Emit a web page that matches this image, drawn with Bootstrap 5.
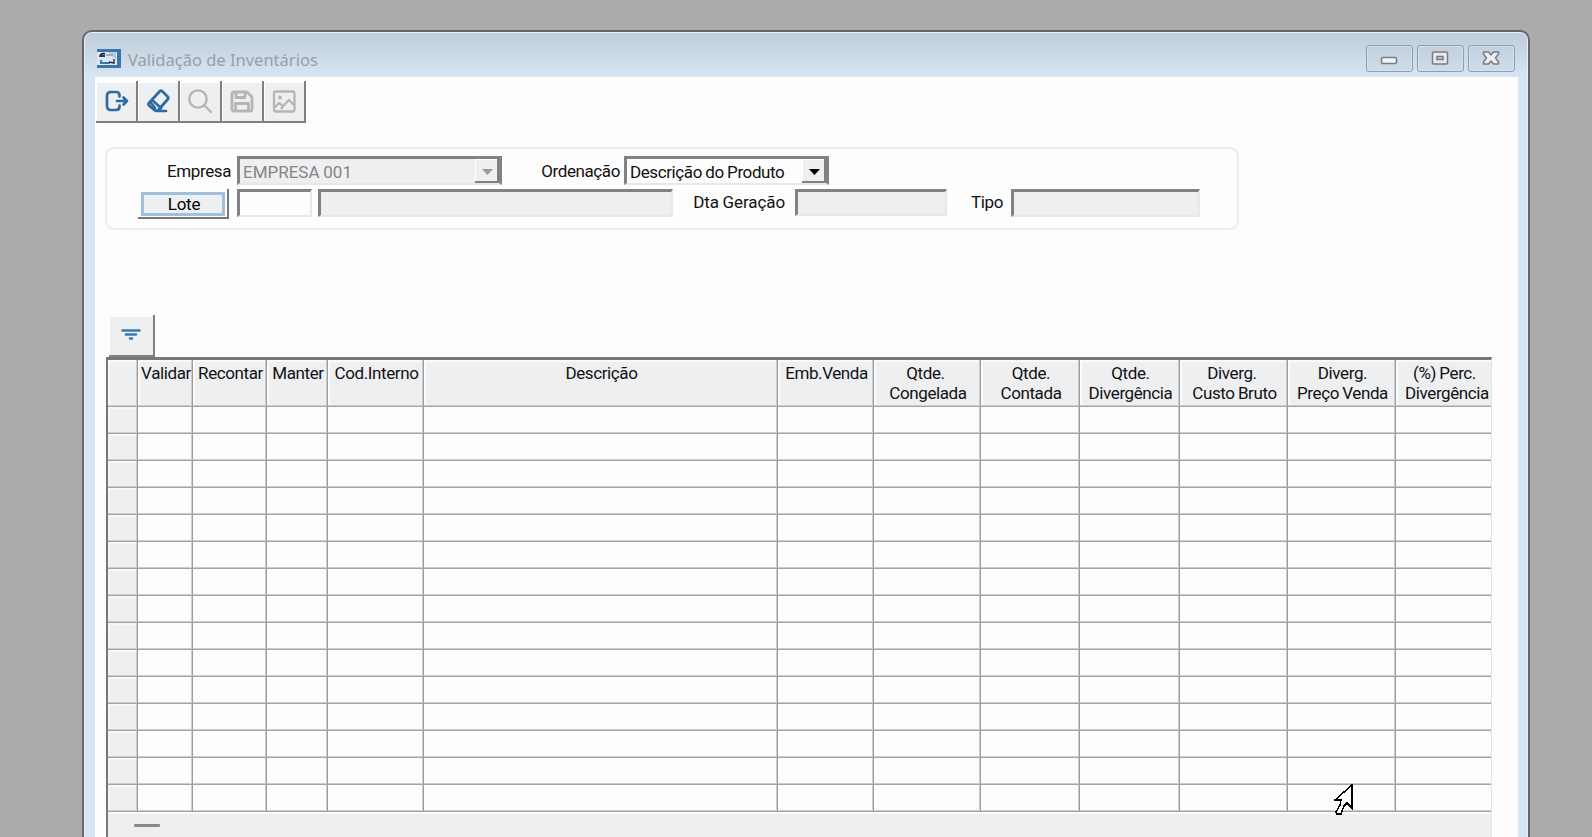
<!DOCTYPE html>
<html lang="pt-BR">
<head>
<meta charset="utf-8">
<meta name="viewport" content="width=device-width, initial-scale=1">
<title>Validação de Inventários</title>
<link rel="stylesheet" href="https://cdn.jsdelivr.net/npm/bootstrap@5.3.0/dist/css/bootstrap.min.css">
<style>
html,body{height:100%}
body{background:#ababab;overflow:hidden;font-family:Roboto,"Liberation Sans",sans-serif;font-size:17px;letter-spacing:-.4px;word-spacing:-.5px;line-height:20px;color:#111}
.win{width:1448px;height:830px;margin:30px 0 0 82px;border:2px solid #666;border-radius:10px 10px 0 0;background:linear-gradient(#becedb 0,#c3d1de 8px,#d7e4f1 44px,#d7e4f1 100%);box-shadow:inset 0 1px 0 #eef3f8,inset 1px 0 0 #e6eef6,inset -1px 0 0 #e6eef6;padding:0 10px 0 11px}
.titlebar{height:45px;padding:13px 1px 0 2px}
.caption{font-family:"Noto Sans",sans-serif;font-size:16.5px;letter-spacing:0;word-spacing:0;line-height:24px;color:#9a9ea6;margin-left:7px;margin-top:3px}
.wbtn{width:47px;height:27px;border:1px solid #8f9db8;border-radius:3px;background:linear-gradient(#c3d0de,#cedbe8);box-shadow:inset 0 0 0 1px #d6e1ec}
.client{background:#fdfdfd;height:785px;padding:4px 0 0 1px}
.tool{width:42px;height:42px;background:#eeeff1;border-right:2px solid #808080;border-bottom:2px solid #808080;box-shadow:inset 1px 2px 0 #fdfdfd}
.panel{width:1134px;height:83px;margin:24px 0 0 9px;border:2px solid #ececec;border-radius:9px;padding:7px 0 0 31px}
.sunk{background:#eeeff1;border:2px solid #e8e8e8;border-top:3px solid #828282;border-left:3px solid #828282;height:28px}
.combo{height:29px;border-right:3px solid #828282;border-top-color:#828282;white-space:nowrap;padding-left:3px;line-height:27px}
.drop{width:24px;height:24px;background:#eeeff1;border-right:2px solid #808080;border-bottom:2px solid #808080;box-shadow:inset 1px 1px 0 #fff}
.lbl{white-space:nowrap;text-align:right}
.lote{width:91px;height:30px;border:0;border-right:2px solid #777;border-bottom:2px solid #777;padding:3px 2px 1px 3px;background:#fdfdfd;letter-spacing:-.2px}
.lote span{display:block;height:24px;border:3px solid #a3bfe0;background:#eeeff1;line-height:19px;text-align:center;padding-left:2px}
.filter{width:46px;height:42px;margin:85px 0 0 13px}
.gridbox{width:1386px;height:480px;margin-left:10px;border-top:3px solid #777;border-left:2px solid #777;border-right:1px solid #e4e4e4;overflow:hidden;background:#eeeff1}
.grid{table-layout:fixed;border-collapse:separate;border-spacing:0;width:1398px;background:#fdfdfd}
.grid th,.grid td{padding:0;border-right:1px solid #9c9c9c;border-bottom:1px solid #a4a4a4;height:27px;box-shadow:inset -1px -1px 0 #cdcdcd;overflow:hidden}
.grid th{font-weight:400;height:47px;background:#eeeff1;text-align:center;vertical-align:top;padding-top:4px;white-space:nowrap;box-shadow:inset -1px -1px 0 #cdcdcd,inset 2px 2px 0 #fafafa;line-height:19.5px}
.grid th div{margin:0 -21px 0 -19px}
.grid .q::after{content:"";display:inline-block;width:5px}
.grid td:first-child{background:#eeeff1;box-shadow:inset -1px -1px 0 #cdcdcd,inset 1px 2px 0 #f8f8f8}
.foot{height:26px;border-top:2px solid #fafafa;padding:10px 0 0 26px}
.dash{width:26px;height:3px;background:#8a8a8a;border-radius:1px}
.cursor{position:absolute;left:1334px;top:784px}
</style>
</head>
<body>
<div class="win">
  <div class="titlebar d-flex align-items-start">
    <svg width="24" height="19" viewBox="0 0 24 19" class="mt-1"><path d="M0 0h24v19H0z" fill="#3a76a8"/><path d="M0 3h20v13H0z" fill="#dfe8f2"/><path d="M11 3h8v8z" fill="#b8cbe0"/><path d="M3 8c0-3 3-4 5-3M3 7h5" fill="none" stroke="#26384a" stroke-width="2"/><path d="M4 11v3h9" fill="none" stroke="#3a76a8" stroke-width="2"/><path d="M9 6h7" fill="none" stroke="#7fa3c4" stroke-width="1.500"/><path d="M12 13l5 1v-4" fill="none" stroke="#26384a" stroke-width="1.500"/></svg>
    <span class="caption">Validação de Inventários</span>
    <div class="ms-auto d-flex" style="gap:4px;margin-right:2px">
      <div class="wbtn"><svg width="45" height="25"><rect x="14.500" y="11.500" width="15" height="6" rx="1" fill="#f4f4f4" stroke="#777c88" stroke-width="1.500"/></svg></div>
      <div class="wbtn"><svg width="45" height="25"><rect x="14.500" y="6" width="15" height="12" rx="1" fill="#e8e8e8" stroke="#777c88" stroke-width="1.500"/><rect x="19" y="10.500" width="6" height="3" fill="#c3d4e5" stroke="#777c88" stroke-width="1.500"/></svg></div>
      <div class="wbtn"><svg width="45" height="25"><path d="M14.500 6h5l2.500 3 2.500-3h5v2L26.500 12l3 4v2h-5L22 15l-2.500 3h-5v-2l3-4-3-4z" fill="#eee" stroke="#777c88" stroke-width="1.500" stroke-linejoin="round"/></svg></div>
    </div>
  </div>
  <div class="client">
    <div class="d-flex">
      <div class="tool"><svg width="40" height="40" fill="none" stroke="#2c6ca3" stroke-width="2.700" stroke-linecap="round" stroke-linejoin="round"><path d="M23.500 15.500v-1q0-3.500-3.500-3.500h-5q-4 0-4 4v10q0 4 4 4h5q3.500 0 3.500-3.500v-1M21 20h10M27.500 16.500l3.500 3.500-3.500 3.500"/></svg></div>
      <div class="tool"><svg width="40" height="40" fill="none" stroke="#2c6ca3" stroke-width="2.700" stroke-linecap="round" stroke-linejoin="round"><path d="M11 22l10.500-11.500q1.500-1.500 3 0l5 5q1.500 1.500 0 3L20 29.500h-3l-6-5q-1.200-1.200 0-2.500zM14 19l9 8M18 30h10"/><path d="M13 22l4 5"/></svg></div>
      <div class="tool"><svg width="40" height="40" fill="none" stroke="#b5b5b5" stroke-width="2.300" stroke-linecap="round"><circle cx="18" cy="18" r="8.700"/><path d="M24.500 24.500l6.500 6.500"/></svg></div>
      <div class="tool"><svg width="40" height="40" fill="none" stroke="#b5b5b5" stroke-width="2.800" stroke-linejoin="round"><path d="M12 11h13l5 5v12q0 2-2 2H12q-2 0-2-2V13q0-2 2-2zM14 11v5.500h9V11M13.500 30v-7.500h13V30"/></svg></div>
      <div class="tool"><svg width="40" height="40" fill="none" stroke="#b5b5b5" stroke-width="2.300" stroke-linejoin="round"><rect x="10" y="10.500" width="20.500" height="20" rx="2"/><path d="M10 27l5-5 4 3 6-6 5 5M17 28l2-3"/><circle cx="16" cy="16.500" r="2" fill="#b5b5b5" stroke="none"/></svg></div>
    </div>
    <div class="panel">
      <div class="d-flex">
        <div class="lbl" style="width:93px;padding-top:5px">Empresa</div>
        <div class="sunk combo d-flex justify-content-between" style="width:265px;margin-left:6px;color:#858585;letter-spacing:0"><span>EMPRESA 001</span><div class="drop"><svg width="22" height="22" class="d-block"><path d="M7 10h11l-5.500 6z" fill="#999"/></svg></div></div>
        <div class="lbl" style="width:118px;padding-top:5px">Ordenação</div>
        <div class="sunk combo d-flex justify-content-between" style="width:205px;margin-left:4px;background:#fdfdfd"><span>Descrição do Produto</span><div class="drop"><svg width="22" height="22" class="d-block"><path d="M7 10h11l-5.500 6z" fill="#000"/></svg></div></div>
      </div>
      <div class="d-flex" style="margin-top:4px">
        <button class="lote"><span>Lote</span></button>
        <div class="sunk" style="width:75px;margin-left:8px;background:#fdfdfd"></div>
        <div class="sunk" style="width:355px;margin-left:6px"></div>
        <div class="lbl" style="width:112px;padding-top:3px;letter-spacing:-.1px">Dta Geração</div>
        <div class="sunk" style="width:152px;margin-left:10px;height:27px"></div>
        <div class="lbl" style="width:56px;padding-top:3px">Tipo</div>
        <div class="sunk" style="width:189px;margin-left:8px"></div>
      </div>
    </div>
    <div class="tool filter"><svg width="44" height="40" stroke="#3a78b0" stroke-width="2.600" stroke-linecap="round"><path d="M13.500 15.500h17M17 19.500h10M21 23.500h2"/></svg></div>
    <div class="gridbox">
      <table class="grid">
        <colgroup id="cols"></colgroup>
        <thead><tr>
          <th></th><th><div>Validar</div></th><th><div>Recontar</div></th><th><div>Manter</div></th><th><div>Cod.Interno</div></th><th><div>Descrição</div></th><th><div>Emb.Venda</div></th>
          <th><div><span class="q">Qtde.</span><br>Congelada</div></th><th><div>Qtde.<br>Contada</div></th><th><div>Qtde.<br>Divergência</div></th><th><div><span class="q">Diverg.</span><br>Custo Bruto</div></th><th><div>Diverg.<br>Preço Venda</div></th><th><div style="margin-right:-16px"><span class="q">(%) Perc.</span><br>Divergência</div></th>
        </tr></thead>
        <tbody id="rows"></tbody>
      </table>
      <div class="foot"><div class="dash"></div></div>
    </div>
  </div>
</div>
<svg class="cursor" width="20" height="32" viewBox="0 0 20 32" shape-rendering="crispEdges"><path d="M18 1v23l-5-5-3 3-3 8h-4l-1-2 4-7 1-5H1z" fill="#fdfdfd" stroke="#000" stroke-width="1.500"/></svg>
<script src="https://cdn.jsdelivr.net/npm/bootstrap@5.3.0/dist/js/bootstrap.bundle.min.js"></script>
<script>
const widths = [30, 55, 74, 61, 96, 354, 96, 107, 99, 100, 108, 108, 106];
document.getElementById('cols').innerHTML = widths.map(w => `<col style="width:${w}px">`).join('');
document.querySelector('.grid').style.width = widths.reduce((a, b) => a + b) + 'px';
document.getElementById('rows').innerHTML = ('<tr>' + '<td></td>'.repeat(widths.length) + '</tr>').repeat(15);
</script>
</body>
</html>
